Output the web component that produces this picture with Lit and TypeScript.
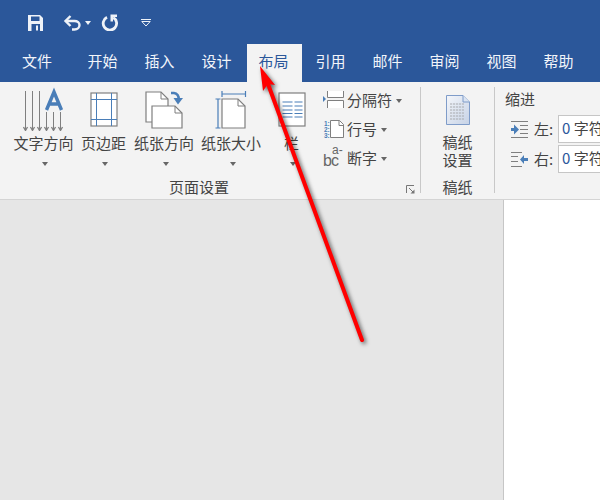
import { LitElement, html, css, svg } from "lit";
import { customElement } from "lit/decorators.js";

const BLUE = "#4a7eb8";
const GR = "#7f7f7f";
const W = "#eef2f8";

const icons = {
  save: svg`<svg width="17" height="16" viewBox="0 0 17 16"><path fill="${W}" d="M1 0h12l3 3v13H1z"/><path fill="#2b579a" d="M4 1.500h8.500v4.500H4zM4.500 9h8.500v7H4.500z"/><path fill="${W}" d="M9 10.500h2v5H9z"/></svg>`,
  undo: svg`<svg width="19" height="16" viewBox="0 0 19 16"><path fill="none" stroke="${W}" stroke-width="2.400" d="M3 6h8.500c3 0 5 1.800 5 4s-2 4.500-5 4.500H9"/><path fill="none" stroke="${W}" stroke-width="2.400" d="M7.500 1L2.500 6l5 5"/></svg>`,
  redo: svg`<svg width="18" height="17" viewBox="0 0 18 17"><path fill="none" stroke="${W}" stroke-width="2.800" d="M6 3.300a6.700 6.700 0 1 0 6.200 .2"/><path fill="${W}" d="M9.500 .5h6.500v2.500h-4v4.500h-2.500z"/></svg>`,
  more: svg`<svg width="11" height="8" viewBox="0 0 11 8"><path fill="${W}" d="M0 0h10v1H0z"/><path fill="none" stroke="${W}" d="M.8 2.500l4.200 4.500 4.200-4.500z"/></svg>`,
  dir: svg`<svg width="42" height="44" viewBox="0 0 42 44"><g transform="translate(0 3)"><g stroke="${GR}" fill="none"><path d="M2.500 1v39M9.500 1v39M16.500 1v39M23.500 22v18M30.500 22v18M37.500 22v18"/><path stroke-width="1.300" d="M.5 37l2 3.500 2-3.500M7.500 37l2 3.500 2-3.500M14.500 37l2 3.500 2-3.500M21.500 37l2 3.500 2-3.500M28.500 37l2 3.500 2-3.500M35.500 37l2 3.500 2-3.500"/></g><path fill="none" stroke="${BLUE}" stroke-width="3.400" d="M23.500 20L31 2l7.500 18M26 14h10"/></g></svg>`,
  margin: svg`<svg class="nudge" width="29" height="44" viewBox="0 0 29 44"><g transform="translate(0 5)"><rect x="1" y="1" width="26" height="33" fill="#fff" stroke="#808080" stroke-width="1.200"/><path stroke="${BLUE}" d="M6.500 1v33M21.500 1v33M1 7.500h26M1 27.500h26"/></g></svg>`,
  orient: svg`<svg width="38" height="44" viewBox="0 0 38 44"><g transform="translate(0 3)"><path fill="#fff" stroke="${GR}" stroke-width="1.200" d="M1 2h15l7 7v23H1z"/><path fill="none" stroke="${GR}" d="M16 2v7h7"/><path fill="#fff" stroke="${GR}" stroke-width="1.200" d="M7 16h23l7 7v15H7z"/><path fill="none" stroke="${GR}" d="M30 16v7h7"/><path fill="none" stroke="${BLUE}" stroke-width="2.600" d="M26 3h3a5 5 0 0 1 4.500 6"/><path fill="${BLUE}" d="M28.500 8h9.500l-5 6.500z"/></g></svg>`,
  size: svg`<svg width="32" height="44" viewBox="0 0 32 44"><g transform="translate(0 3.500)"><path fill="#fff" stroke="${GR}" stroke-width="1.200" d="M7 8.500h16l7 7V37.500H7z"/><path fill="none" stroke="${GR}" d="M23 8.500v7h7"/><path fill="none" stroke="${BLUE}" stroke-width="1.200" d="M.5 8.500h5M3 8.500v29M.5 37.500h5M7 3.500h23.500M7 .5v6M30.500 .5v6"/></g></svg>`,
  col: svg`<svg width="28" height="44" viewBox="0 0 28 44"><g transform="translate(0 5)"><rect x="1" y="1" width="26" height="33" fill="#fff" stroke="${GR}" stroke-width="1.200"/><path stroke="${BLUE}" stroke-width="1.200" d="M4.500 10h10M4.500 14h10M4.500 18h10M4.500 21.500h10M4.500 25h10M16.500 10h8M16.500 14h8M16.500 18h8M16.500 21.500h8M16.500 25h8"/></g></svg>`,
  brk: svg`<svg width="21" height="17" viewBox="0 0 21 17"><path fill="${BLUE}" d="M0 5l3 3-3 3z"/><path fill="#fff" stroke="${GR}" d="M4.500 0v6.500h16V0M4.500 17V9.500h16V17"/></svg>`,
  line: svg`<svg width="21" height="18" viewBox="0 0 21 18"><path fill="#fff" stroke="${GR}" d="M7.500 .5h9l4 4v13H7.500z"/><path fill="none" stroke="${GR}" d="M16 .5v5h5"/><g fill="${BLUE}" font-family="Liberation Sans" font-size="6.500" font-weight="700"><text x="1" y="5.500">1:</text><text x="1" y="11.500">2:</text><text x="1" y="17.500">3:</text></g></svg>`,
  grid: svg`<svg width="24" height="30" viewBox="0 0 24 30"><defs><linearGradient id="g" x1="0" y1="0" x2="1" y2="1"><stop offset="0" stop-color="#f4f6fa"/><stop offset="1" stop-color="#c6d2e6"/></linearGradient></defs><path fill="url(#g)" stroke="#7f9cc9" d="M.5 .5h16.500l6.500 6.500v22.500H.5z"/><path fill="#dbe4f2" stroke="#7f9cc9" d="M17 .5v6.500h6.500"/><path stroke="#a7a9ad" stroke-width="1.200" stroke-dasharray="2.200 .8" d="M4 9h14M4 12h14M4 15h14M4 18h14M4 21h14M4 24h14"/></svg>`,
  left: svg`<svg width="19" height="17" viewBox="0 0 19 17"><path stroke="${GR}" d="M1 .5h17M10 4.500h8M10 8.500h8M10 12.500h8M1 16.500h17"/><path fill="${BLUE}" d="M1 7h3V3.500L9 8.500 4 13.500V10H1z"/></svg>`,
  right: svg`<svg width="19" height="15" viewBox="0 0 19 15"><path stroke="${GR}" d="M1 .5h11M1 4.500h7M1 9.500h7M1 14.500h11"/><path fill="${BLUE}" d="M18 6h-4V3L10 7.500l4 4.500V9h4z"/></svg>`,
  launch: svg`<svg width="9" height="9" viewBox="0 0 9 9"><path fill="none" stroke="#777" d="M.5 8V.5H8"/><path fill="none" stroke="#777" d="M3 3l4.500 4.500"/><path fill="#777" d="M8.500 4.500v4h-4z"/></svg>`,
};

const BIG = [
  { t: "文字方向", i: icons.dir, w: "w67" },
  { t: "页边距", i: icons.margin, w: "w53" },
  { t: "纸张方向", i: icons.orient, w: "w68" },
  { t: "纸张大小", i: icons.size, w: "w66" },
  { t: "栏", i: icons.col, w: "w55" },
];
const TABS = ["开始", "插入", "设计", "布局", "引用", "邮件", "审阅", "视图", "帮助"];

@customElement("app-root")
export class AppRoot extends LitElement {
  static styles = css`
    :host { display: block; width: 600px; height: 500px; position: relative; overflow: hidden;
      font-family: "Noto Sans CJK SC", "Liberation Sans", sans-serif; font-size: 15px; line-height: 18px; color: #444; background: #e6e6e6; }
    .title { height: 44px; background: #2b579a; display: flex; align-items: center; padding: 1px 0 0 27px; box-sizing: border-box; }
    .title svg { display: block; }
    .undo { margin-left: 19px; }
    .drop-w { width: 0; height: 0; border: 3px solid transparent; border-top: 4px solid #eef2f8; border-bottom: 0; margin: 0 10px 0 3px; }
    .more { margin-left: 22px; }
    .tabs { height: 38px; background: #2b579a; display: flex; color: #f2f5fa; }
    .tab { width: 57px; display: flex; align-items: center; justify-content: center; padding-bottom: 5px; box-sizing: border-box; }
    .tab.file { width: 74px; }
    .tab.on { width: 55px; margin-left: 2px; padding-right: 2px; background: #f3f3f3; color: #2b579a; }
    .ribbon { height: 117px; background: #f3f3f3; display: flex; overflow: hidden; border-bottom: 1px solid #d4d4d4; }
    .group { display: flex; flex-direction: column; flex: none; box-sizing: border-box; height: 106px; margin-top: 5px; border-right: 1px solid #c8c8c8; }
    .g1 { width: 421px; padding-left: 10px; position: relative; }
    .g2 { width: 74px; }
    .g3 { flex: 1; border: 0; padding: 3px 0 0 10px; min-width: 0; }
    .items { flex: 1; display: flex; min-height: 0; }
    .label { height: 15px; text-align: center; line-height: 18px; flex: none; }
    .g1 .label { padding-right: 32px; }
    .big { display: flex; flex-direction: column; align-items: center; flex: none; }
    .w67 { width: 67px; } .w53 { width: 53px; } .w68 { width: 68px; } .w66 { width: 66px; } .w55 { width: 55px; }
    .ic { height: 44px; display: flex; align-items: flex-start; justify-content: center; }
    .nudge { margin-left: 2px; }
    .big .t { margin-top: 3px; }
    .drop { width: 0; height: 0; border: 3px solid transparent; border-top: 4px solid #666; border-bottom: 0; }
    .big .drop { margin: 10px 0 0 3px; }
    .small { display: flex; flex-direction: column; margin-left: 4px; margin-top: -2px; }
    .row { height: 29px; display: flex; align-items: center; white-space: nowrap; }
    .ri { width: 24px; display: flex; flex: none; }
    .row .drop { margin-left: 4px; margin-top: 2px; }
    .hy { position: relative; width: 24px; height: 19px; font-family: "Liberation Sans", sans-serif; color: #666; line-height: 1; top: 1px; }
    .hy b { position: absolute; left: 0; bottom: -1px; font-weight: 400; font-size: 16px; letter-spacing: -1px; }
    .hy i { position: absolute; left: 9px; top: -5px; font-style: normal; font-size: 12px; }
    .launch { position: absolute; right: 5px; bottom: -1px; display: flex; }
    .g2 .items { flex-direction: column; align-items: center; padding-top: 8px; }
    .g2 .t { text-align: center; margin-top: 8px; }
    .ind { display: flex; align-items: center; padding-left: 5px; height: 28px; white-space: nowrap; margin-bottom: 2px; }
    .ind svg { flex: none; }
    .lab { width: 24px; margin-left: 5px; flex: none; }
    .head { margin-bottom: 7px; }
    .input { width: 90px; height: 28px; flex: none; box-sizing: border-box; border: 1px solid #c6c6c6; background: #fff; padding-left: 3px; line-height: 24px; }
    .input em { font-style: normal; color: #2b579a; }
    .doc { height: 301px; display: flex; justify-content: flex-end; }
    .page { width: 96px; background: #fff; border-left: 1px solid #c6c6c6; }
    .arrow { position: absolute; left: 0; top: 0; pointer-events: none; filter: drop-shadow(2px 2px 2px rgba(0,0,0,.6)); }
  `;

  render() {
    return html`
      <div class="title">
        ${icons.save}
        <span class="undo">${icons.undo}</span><span class="drop-w"></span>
        ${icons.redo}
        <span class="more">${icons.more}</span>
      </div>
      <div class="tabs">
        <div class="tab file">文件</div>
        ${TABS.map((t) => html`<div class="tab ${t === "布局" ? "on" : ""}">${t}</div>`)}
      </div>
      <div class="ribbon">
        <div class="group g1">
          <div class="items">
            ${BIG.map((b) => html`<div class="big ${b.w}"><div class="ic">${b.i}</div><div class="t">${b.t}</div><div class="drop"></div></div>`)}
            <div class="small">
              <div class="row"><span class="ri">${icons.brk}</span>分隔符<span class="drop"></span></div>
              <div class="row"><span class="ri">${icons.line}</span>行号<span class="drop"></span></div>
              <div class="row"><span class="ri"><span class="hy"><b>bc</b><i>a-</i></span></span>断字<span class="drop"></span></div>
            </div>
          </div>
          <div class="label">页面设置</div>
          <span class="launch">${icons.launch}</span>
        </div>
        <div class="group g2">
          <div class="items">${icons.grid}<div class="t">稿纸<br />设置</div></div>
          <div class="label">稿纸</div>
        </div>
        <div class="group g3">
          <div class="head">缩进</div>
          <div class="ind">${icons.left}<span class="lab">左:</span><div class="input"><em>0</em> 字符</div></div>
          <div class="ind">${icons.right}<span class="lab">右:</span><div class="input"><em>0</em> 字符</div></div>
        </div>
      </div>
      <div class="doc"><div class="page"></div></div>
      <svg class="arrow" width="600" height="500" viewBox="0 0 600 500">
        <path fill="none" stroke="#f00" stroke-width="4" stroke-linecap="round" d="M362 340L268 84"/>
        <path fill="#f00" d="M260 66L275 85L268 84L263 91z"/>
      </svg>
    `;
  }
}
